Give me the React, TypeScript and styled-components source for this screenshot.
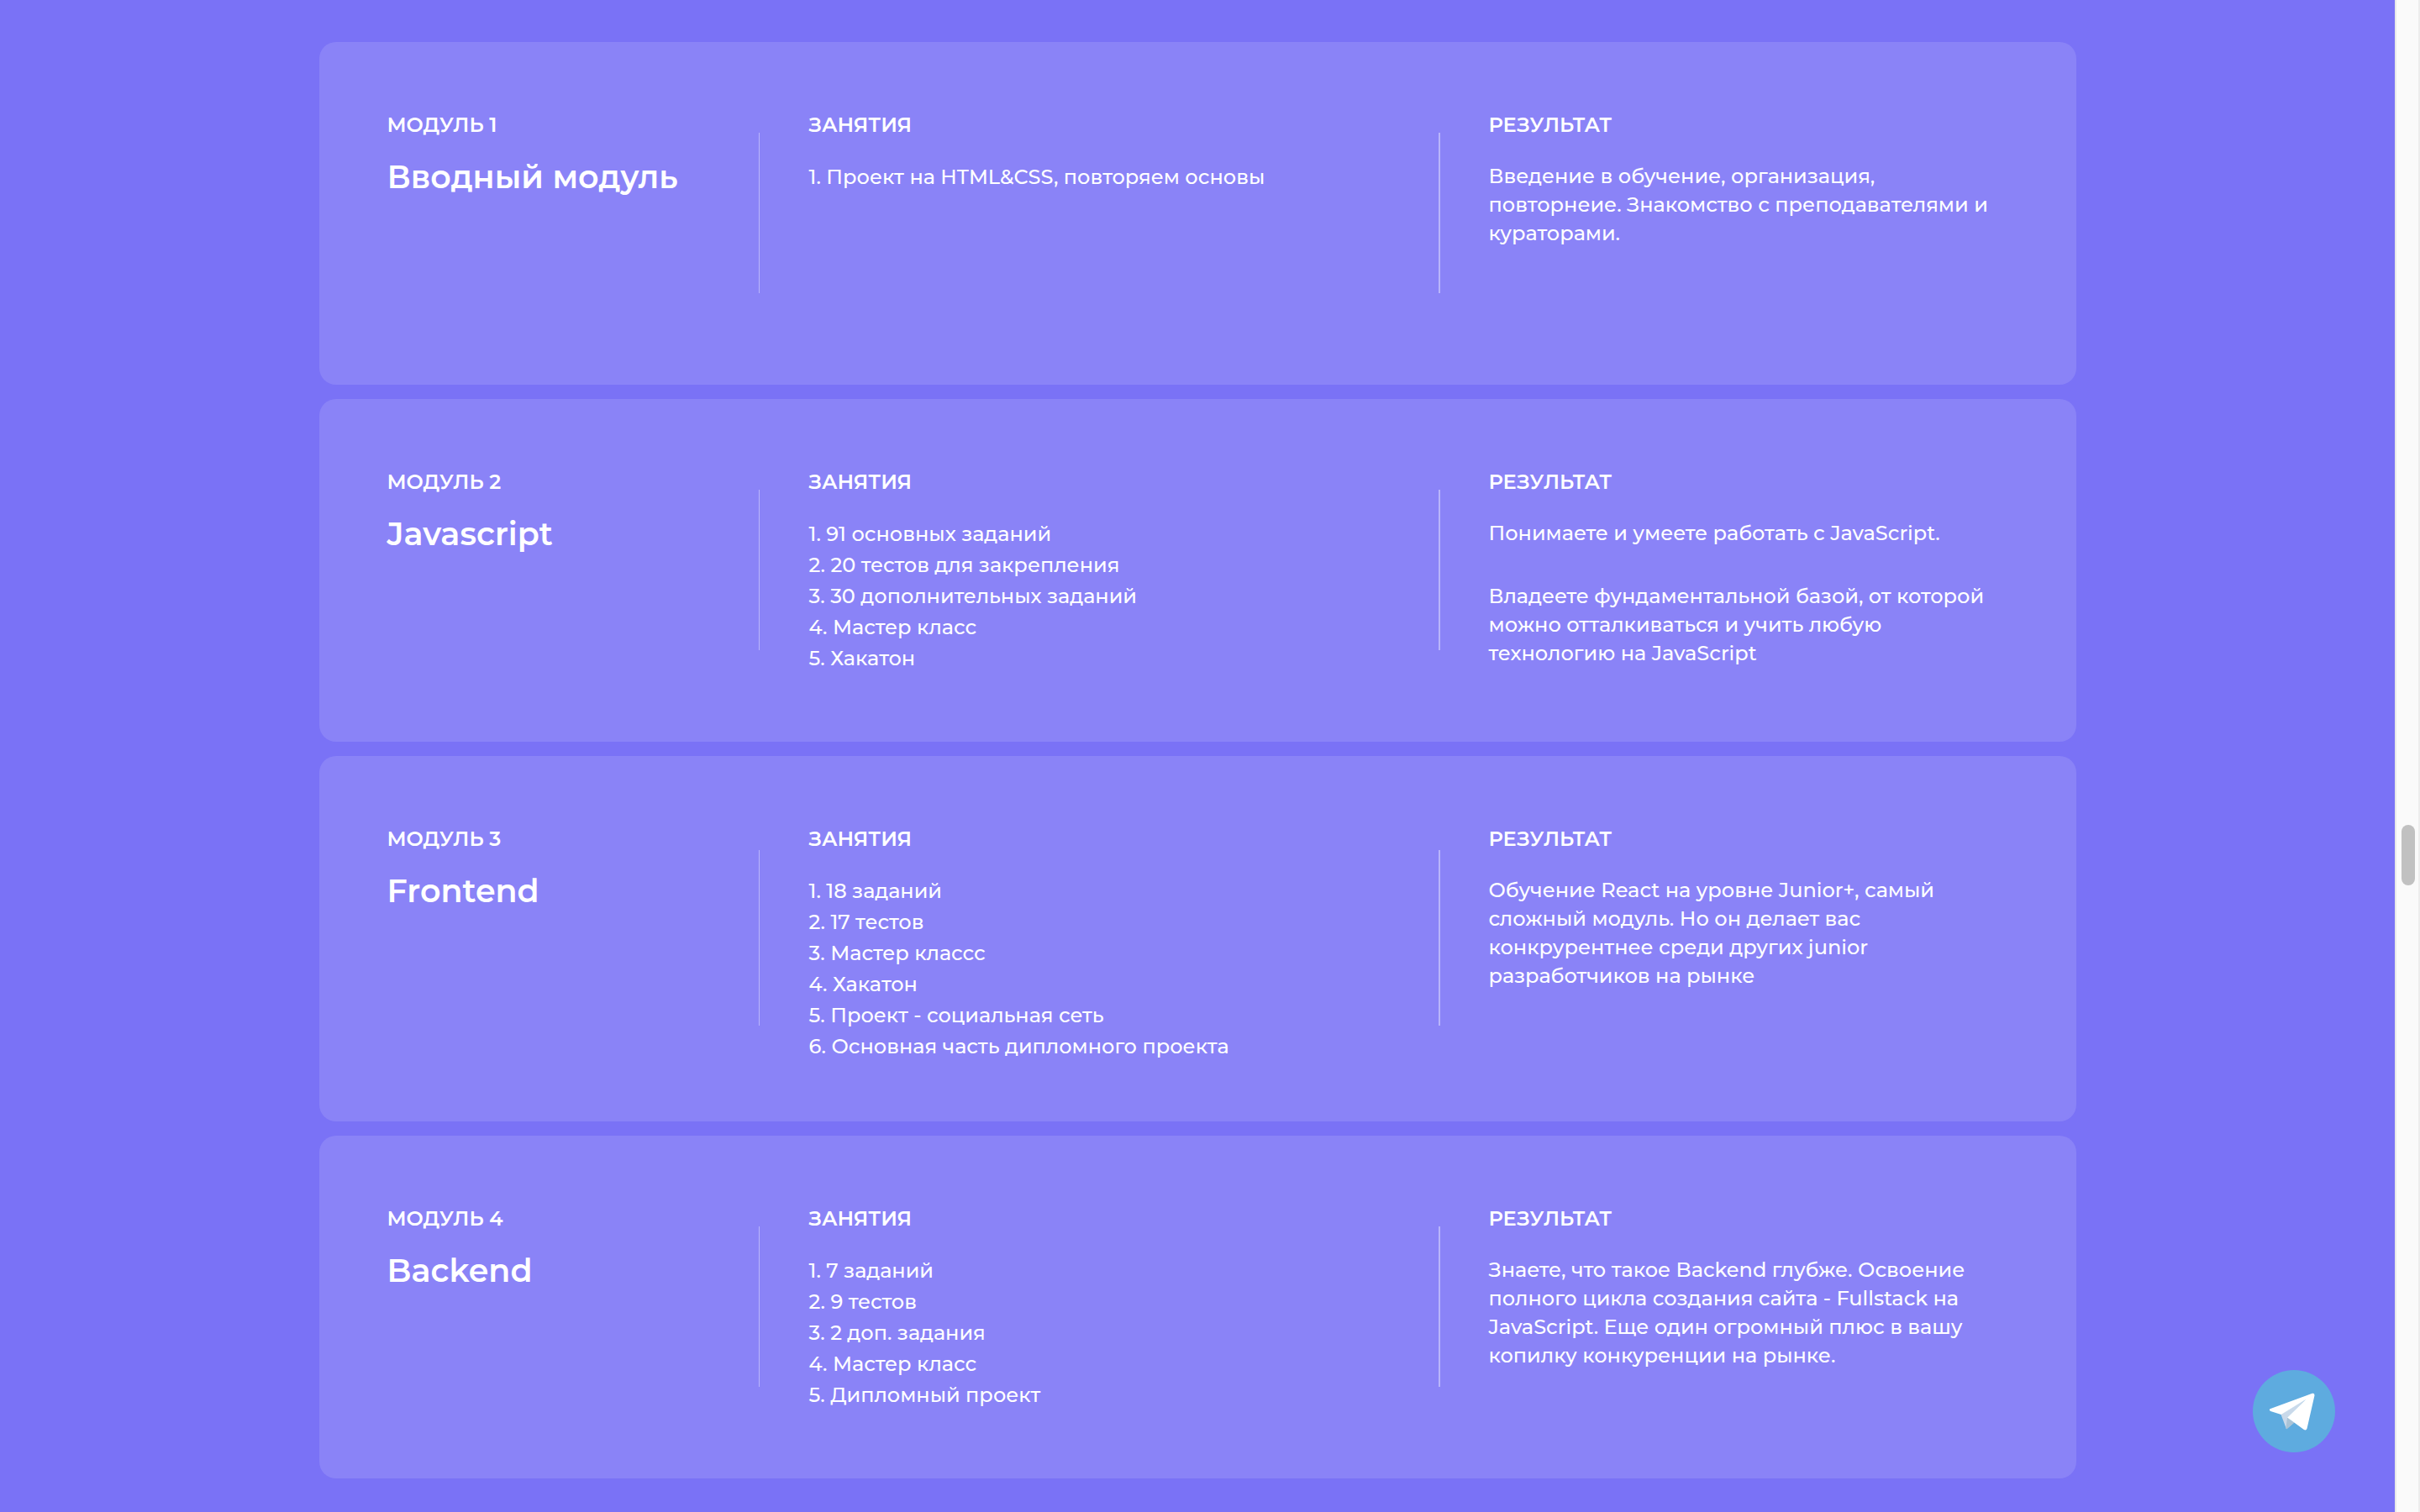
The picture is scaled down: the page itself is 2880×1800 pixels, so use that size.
import React from "react";
import styled, { createGlobalStyle } from "styled-components";

const GlobalStyle = createGlobalStyle`
  *, *::before, *::after { box-sizing: border-box; }
  html, body { margin: 0; padding: 0; background: #7a72f6; }
  body {
    color: #ffffff;
    font-family: Montserrat, Inter, "Noto Sans", sans-serif;
    font-size: 24px;
    font-weight: 500;
    line-height: 34px;
  }
`;

const Page = styled.div`
  display: grid;
  grid-template-columns: minmax(0, 1fr) 30px;
  min-height: 100vh;
`;

const Main = styled.main`
  padding: 50px 40px 40px;
`;

const Modules = styled.div`
  display: flex;
  flex-direction: column;
  gap: 17px;
  max-width: 2091px;
  margin: 0 auto;
`;

const Card = styled.article`
  display: grid;
  grid-template-columns: 442fr 809fr 678fr;
  min-height: 408px;
  padding: 60px 81px 61px;
  border-radius: 20px;
  background: #8a83f7;
`;

const Column = styled.section<{ $line?: number }>`
  padding: 22px 0 11px ${(p) => (p.$line ? "60px" : "0")};
  background: ${(p) =>
    p.$line
      ? `linear-gradient(#b9b5fb, #b9b5fb) left center / ${p.$line}px 66.667% no-repeat`
      : "none"};
`;

const Label = styled.h3`
  margin: 0 0 27px;
  font-size: 24px;
  font-weight: 600;
  line-height: 34px;
  text-transform: uppercase;
`;

const Title = styled.h2`
  margin: 0;
  font-size: 38px;
  font-weight: 600;
  line-height: 36px;
`;

const Lessons = styled.ol`
  display: flex;
  flex-direction: column;
  gap: 2px;
  margin: 0;
  padding: 0;
  line-height: 35px;
  list-style: none;
`;

const Results = styled.div`
  display: flex;
  flex-direction: column;
  gap: 41px;
`;

const Text = styled.p`
  margin: 0;
`;

const Track = styled.div`
  display: grid;
  grid-template-rows: 982fr 72px 746fr;
  justify-items: center;
  position: sticky;
  top: 0;
  height: 100vh;
  border-left: 2px solid #e8e8e8;
  background: #fafafa;
  box-shadow: inset -2px 0 #ededed;
`;

const Thumb = styled.div`
  grid-row: 2;
  width: 16px;
  border-radius: 8px;
  background: #c1c1c1;
`;

const TelegramLink = styled.a`
  position: fixed;
  right: 101px;
  bottom: 71px;
  width: 98px;
  height: 98px;

  svg {
    display: block;
    width: 100%;
    height: 100%;
  }
`;

type Module = { title: string; lessons: string[]; results: string[] };

const modules: Module[] = [
  {
    title: "Вводный модуль",
    lessons: ["Проект на HTML&CSS, повторяем основы"],
    results: [
      "Введение в обучение, организация, повторнеие. Знакомство с преподавателями и кураторами.",
    ],
  },
  {
    title: "Javascript",
    lessons: [
      "91 основных заданий",
      "20 тестов для закрепления",
      "30 дополнительных заданий",
      "Мастер класс",
      "Хакатон",
    ],
    results: [
      "Понимаете и умеете работать с JavaScript.",
      "Владеете фундаментальной базой, от которой можно отталкиваться и учить любую технологию на JavaScript",
    ],
  },
  {
    title: "Frontend",
    lessons: [
      "18 заданий",
      "17 тестов",
      "Мастер классс",
      "Хакатон",
      "Проект - социальная сеть",
      "Основная часть дипломного проекта",
    ],
    results: [
      "Обучение React на уровне Junior+, самый сложный модуль. Но он делает вас конкрурентнее среди других junior разработчиков на рынке",
    ],
  },
  {
    title: "Backend",
    lessons: [
      "7 заданий",
      "9 тестов",
      "2 доп. задания",
      "Мастер класс",
      "Дипломный проект",
    ],
    results: [
      "Знаете, что такое Backend глубже. Освоение полного цикла создания сайта - Fullstack на JavaScript. Еще один огромный плюс в вашу копилку конкуренции на рынке.",
    ],
  },
];

export default function App() {
  return (
    <>
      <GlobalStyle />
      <Page>
        <Main>
          <Modules>
            {modules.map((module, index) => (
              <Card key={module.title}>
                <Column>
                  <Label>Модуль {index + 1}</Label>
                  <Title>{module.title}</Title>
                </Column>
                <Column $line={1}>
                  <Label>Занятия</Label>
                  <Lessons>
                    {module.lessons.map((lesson, n) => (
                      <li key={lesson}>{`${n + 1}. ${lesson}`}</li>
                    ))}
                  </Lessons>
                </Column>
                <Column $line={2}>
                  <Label>Результат</Label>
                  <Results>
                    {module.results.map((result) => (
                      <Text key={result}>{result}</Text>
                    ))}
                  </Results>
                </Column>
              </Card>
            ))}
          </Modules>
        </Main>
        <Track>
          <Thumb />
        </Track>
      </Page>
      <TelegramLink href="https://t.me/" aria-label="Telegram">
        <svg viewBox="0 0 296 296" aria-hidden="true">
          <circle cx="148" cy="148" r="148" fill="#5eabdf" />
          <path d="M101 159 L121 212 L147 190 L125 170 L193 104 Z" fill="#c9d9ea" />
          <path d="M124 171 L119 210 Q121 214 125 210 L149 189 Z" fill="#aac3d6" />
          <path
            d="M62 140 L214 84 Q222 82 222 91 L195 210 Q192 219 183 214 L124 171 L191 106 L102 160 L64 148 Q57 144 62 140 Z"
            fill="#ffffff"
          />
        </svg>
      </TelegramLink>
    </>
  );
}
